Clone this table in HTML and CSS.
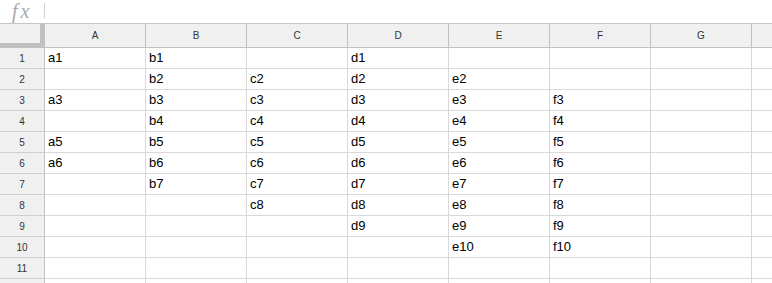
FILE: index.html
```html
<!DOCTYPE html>
<html>
<head>
<meta charset="utf-8">
<link rel="stylesheet" href="styles.css">
</head>
<body>
<div class="formula-bar">
  <span class="fx">fx</span>
  <span class="sep"></span>
</div>
<div class="sheet">
<table class="grid">
  <colgroup>
    <col class="c-row"><col class="c-col"><col class="c-col"><col class="c-col"><col class="c-col"><col class="c-col"><col class="c-col"><col class="c-col"><col class="c-rest">
  </colgroup>
  <thead>
    <tr class="head">
      <th class="corner"></th><th>A</th><th>B</th><th>C</th><th>D</th><th>E</th><th>F</th><th>G</th><th></th>
    </tr>
  </thead>
  <tbody>
    <tr><th>1</th><td>a1</td><td>b1</td><td></td><td>d1</td><td></td><td></td><td></td><td></td></tr>
    <tr><th>2</th><td></td><td>b2</td><td>c2</td><td>d2</td><td>e2</td><td></td><td></td><td></td></tr>
    <tr><th>3</th><td>a3</td><td>b3</td><td>c3</td><td>d3</td><td>e3</td><td>f3</td><td></td><td></td></tr>
    <tr><th>4</th><td></td><td>b4</td><td>c4</td><td>d4</td><td>e4</td><td>f4</td><td></td><td></td></tr>
    <tr><th>5</th><td>a5</td><td>b5</td><td>c5</td><td>d5</td><td>e5</td><td>f5</td><td></td><td></td></tr>
    <tr><th>6</th><td>a6</td><td>b6</td><td>c6</td><td>d6</td><td>e6</td><td>f6</td><td></td><td></td></tr>
    <tr><th>7</th><td></td><td>b7</td><td>c7</td><td>d7</td><td>e7</td><td>f7</td><td></td><td></td></tr>
    <tr><th>8</th><td></td><td></td><td>c8</td><td>d8</td><td>e8</td><td>f8</td><td></td><td></td></tr>
    <tr><th>9</th><td></td><td></td><td></td><td>d9</td><td>e9</td><td>f9</td><td></td><td></td></tr>
    <tr><th>10</th><td></td><td></td><td></td><td></td><td>e10</td><td>f10</td><td></td><td></td></tr>
    <tr><th>11</th><td></td><td></td><td></td><td></td><td></td><td></td><td></td><td></td></tr>
    <tr><th></th><td></td><td></td><td></td><td></td><td></td><td></td><td></td><td></td></tr>
  </tbody>
</table>
</div>
</body>
</html>
```
FILE: styles.css
```css
html, body {
  margin: 0;
  padding: 0;
  background: #ffffff;
  overflow: hidden;
}
body {
  width: 772px;
  height: 283px;
  font-family: "Liberation Sans", Arial, sans-serif;
}
.formula-bar {
  height: 23px;
  border-bottom: 1px solid #c4c4c4;
  display: flex;
  align-items: flex-start;
}
.fx {
  width: 44px;
  height: 23px;
  padding-left: 12px;
  box-sizing: border-box;
  font-family: "Liberation Serif", "Times New Roman", serif;
  font-style: italic;
  font-size: 20px;
  line-height: normal;
  color: #a8a8a8;
  letter-spacing: 3px;
}
.sep {
  width: 1px;
  height: 15px;
  margin-top: 3px;
  background: #d0d0d0;
}
.sheet {
  width: 772px;
  height: 259px;
  overflow: hidden;
}
.grid {
  border-collapse: separate;
  border-spacing: 0;
  table-layout: fixed;
  width: 852px;
}
.c-row { width: 45px; }
.c-col { width: 101px; }
.c-rest { width: 100px; }
.grid th, .grid td {
  padding: 0;
  box-sizing: border-box;
  border-right: 1px solid #d9d9d9;
  border-bottom: 1px solid #d9d9d9;
  overflow: hidden;
  white-space: nowrap;
}
.grid .head th {
  height: 24px;
  background: #f0f0f0;
  border-right-color: #c0c0c0;
  border-bottom-color: #c0c0c0;
  font-weight: normal;
  font-size: 10px;
  color: #333333;
  text-align: center;
  vertical-align: middle;
}
.grid .head th.corner {
  box-shadow: inset -4px -4px 0 #c0c0c0;
}
.grid tbody th {
  height: 21px;
  background: #f0f0f0;
  border-right-color: #c0c0c0;
  border-bottom-color: #cfcfcf;
  font-weight: normal;
  font-size: 10px;
  color: #333333;
  text-align: center;
  vertical-align: middle;
}
.grid tbody td {
  height: 21px;
  font-size: 13px;
  line-height: 20px;
  color: #000000;
  padding-left: 3px;
  vertical-align: middle;
}
```
